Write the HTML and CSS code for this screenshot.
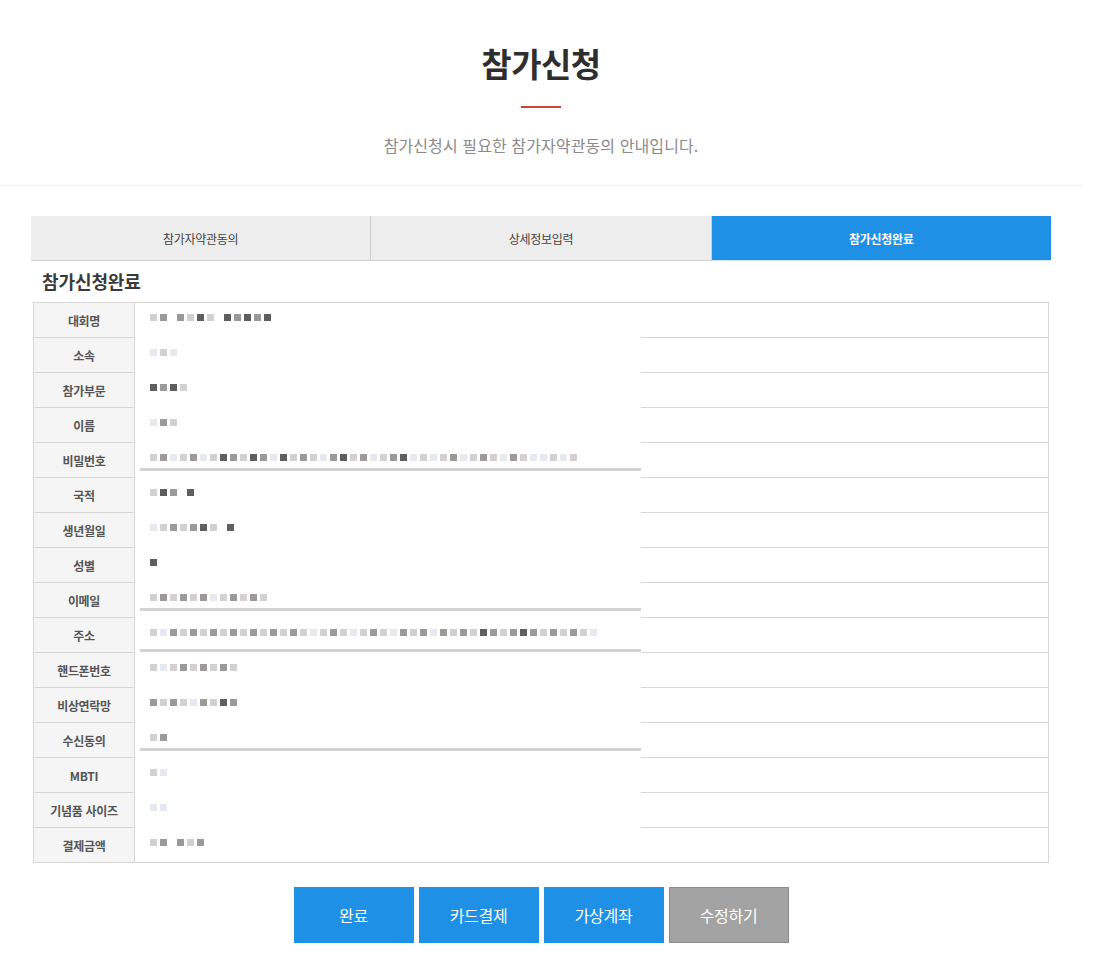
FILE: index.html
```html
<!DOCTYPE html>
<html lang="ko">
<head>
<meta charset="utf-8">
<title>참가신청</title>
<link rel="stylesheet" href="styles.css">
</head>
<body>
<div class="page">
  <header class="hero">
    <h1 class="hero-title">참가신청</h1>
    <span class="hero-bar"></span>
    <p class="hero-sub">참가신청시 필요한 참가자약관동의 안내입니다.</p>
  </header>

  <main class="content">
    <nav class="steps">
      <div class="step">참가자약관동의</div>
      <div class="step">상세정보입력</div>
      <div class="step step-active">참가신청완료</div>
    </nav>

    <h2 class="section-title">참가신청완료</h2>

    <div class="info">
      <div class="row"><div class="label">대회명</div><div class="value"><div class="mask"><div class="pix"><i class="k3"></i><i class="k2"></i><i class="gap"></i><i class="k2"></i><i class="k3"></i><i class="k1"></i><i class="k3"></i><i class="gap"></i><i class="k1"></i><i class="k2"></i><i class="k1"></i><i class="k2"></i><i class="k1"></i></div></div><div class="rest"></div></div></div>
      <div class="row"><div class="label">소속</div><div class="value"><div class="mask"><div class="pix"><i class="k4"></i><i class="k3"></i><i class="k4"></i></div></div><div class="rest"></div></div></div>
      <div class="row"><div class="label">참가부문</div><div class="value"><div class="mask"><div class="pix"><i class="k1"></i><i class="k2"></i><i class="k1"></i><i class="k3"></i></div></div><div class="rest"></div></div></div>
      <div class="row"><div class="label">이름</div><div class="value"><div class="mask"><div class="pix"><i class="k4"></i><i class="k2"></i><i class="k3"></i></div></div><div class="rest"></div></div></div>
      <div class="row"><div class="label">비밀번호</div><div class="value"><div class="mask"><div class="pix"><i class="k3"></i><i class="k2"></i><i class="k4"></i><i class="k3"></i><i class="k2"></i><i class="k4"></i><i class="k3"></i><i class="k1"></i><i class="k2"></i><i class="k3"></i><i class="k1"></i><i class="k2"></i><i class="k4"></i><i class="k1"></i><i class="k3"></i><i class="k2"></i><i class="k3"></i><i class="k4"></i><i class="k2"></i><i class="k1"></i><i class="k3"></i><i class="k2"></i><i class="k4"></i><i class="k3"></i><i class="k2"></i><i class="k1"></i><i class="k4"></i><i class="k3"></i><i class="k4"></i><i class="k3"></i><i class="k2"></i><i class="k4"></i><i class="k3"></i><i class="k2"></i><i class="k3"></i><i class="k4"></i><i class="k2"></i><i class="k3"></i><i class="k4"></i><i class="k4"></i><i class="k3"></i><i class="k4"></i><i class="k3"></i></div><div class="smear"></div></div><div class="rest"></div></div></div>
      <div class="row"><div class="label">국적</div><div class="value"><div class="mask"><div class="pix"><i class="k3"></i><i class="k1"></i><i class="k2"></i><i class="gap"></i><i class="k1"></i></div></div><div class="rest"></div></div></div>
      <div class="row"><div class="label">생년월일</div><div class="value"><div class="mask"><div class="pix"><i class="k4"></i><i class="k3"></i><i class="k2"></i><i class="k3"></i><i class="k2"></i><i class="k1"></i><i class="k3"></i><i class="gap"></i><i class="k1"></i></div></div><div class="rest"></div></div></div>
      <div class="row"><div class="label">성별</div><div class="value"><div class="mask"><div class="pix"><i class="k1"></i></div></div><div class="rest"></div></div></div>
      <div class="row"><div class="label">이메일</div><div class="value"><div class="mask"><div class="pix"><i class="k3"></i><i class="k2"></i><i class="k3"></i><i class="k2"></i><i class="k3"></i><i class="k2"></i><i class="k4"></i><i class="k3"></i><i class="k2"></i><i class="k3"></i><i class="k2"></i><i class="k3"></i></div><div class="smear"></div></div><div class="rest"></div></div></div>
      <div class="row"><div class="label">주소</div><div class="value"><div class="mask"><div class="pix"><i class="k3"></i><i class="k4"></i><i class="k2"></i><i class="k3"></i><i class="k2"></i><i class="k3"></i><i class="k2"></i><i class="k3"></i><i class="k2"></i><i class="k3"></i><i class="k2"></i><i class="k3"></i><i class="k2"></i><i class="k3"></i><i class="k2"></i><i class="k3"></i><i class="k4"></i><i class="k3"></i><i class="k2"></i><i class="k3"></i><i class="k4"></i><i class="k3"></i><i class="k2"></i><i class="k3"></i><i class="k4"></i><i class="k2"></i><i class="k3"></i><i class="k2"></i><i class="k4"></i><i class="k2"></i><i class="k3"></i><i class="k2"></i><i class="k3"></i><i class="k1"></i><i class="k2"></i><i class="k3"></i><i class="k2"></i><i class="k1"></i><i class="k2"></i><i class="k3"></i><i class="k2"></i><i class="k3"></i><i class="k2"></i><i class="k3"></i><i class="k4"></i></div><div class="smear smear-low"></div></div><div class="rest"></div></div></div>
      <div class="row"><div class="label">핸드폰번호</div><div class="value"><div class="mask"><div class="pix"><i class="k3"></i><i class="k4"></i><i class="k3"></i><i class="k2"></i><i class="k3"></i><i class="k2"></i><i class="k3"></i><i class="k2"></i><i class="k3"></i></div></div><div class="rest"></div></div></div>
      <div class="row"><div class="label">비상연락망</div><div class="value"><div class="mask"><div class="pix"><i class="k2"></i><i class="k3"></i><i class="k2"></i><i class="k3"></i><i class="k4"></i><i class="k2"></i><i class="k3"></i><i class="k1"></i><i class="k2"></i></div></div><div class="rest"></div></div></div>
      <div class="row"><div class="label">수신동의</div><div class="value"><div class="mask"><div class="pix"><i class="k3"></i><i class="k2"></i></div><div class="smear"></div></div><div class="rest"></div></div></div>
      <div class="row"><div class="label">MBTI</div><div class="value"><div class="mask"><div class="pix"><i class="k3"></i><i class="k4"></i></div></div><div class="rest"></div></div></div>
      <div class="row"><div class="label">기념품 사이즈</div><div class="value"><div class="mask"><div class="pix"><i class="k4"></i><i class="k4"></i></div></div><div class="rest"></div></div></div>
      <div class="row"><div class="label">결제금액</div><div class="value"><div class="mask"><div class="pix"><i class="k3"></i><i class="k2"></i><i class="gap"></i><i class="k2"></i><i class="k3"></i><i class="k2"></i></div></div><div class="rest"></div></div></div>
    </div>

    <div class="actions">
      <button class="btn btn-blue" type="button">완료</button>
      <button class="btn btn-blue" type="button">카드결제</button>
      <button class="btn btn-blue" type="button">가상계좌</button>
      <button class="btn btn-gray" type="button">수정하기</button>
    </div>
  </main>
</div>
</body>
</html>
```

FILE: styles.css
```css
* { box-sizing: border-box; }

html, body {
  margin: 0;
  padding: 0;
  background: #fff;
}

body {
  font-family: "Noto Sans CJK KR", "Noto Sans", sans-serif;
  color: #333;
}

.page {
  width: 1082px;
}

.hero {
  display: flex;
  flex-direction: column;
  align-items: center;
  padding-top: 43px;
  padding-bottom: 30px;
  border-bottom: 1px solid #eee;
}

.hero-title {
  margin: 0;
  font-size: 33px;
  line-height: 40px;
  font-weight: 700;
  color: #2e2e2e;
  letter-spacing: -0.5px;
}

.hero-bar {
  display: block;
  width: 40px;
  height: 2px;
  margin-top: 23px;
  background: #c9473a;
}

.hero-sub {
  margin: 27px 0 0;
  font-size: 16px;
  line-height: 20px;
  color: #8a8a8a;
  letter-spacing: 0.1px;
}

.content {
  width: 1020px;
  margin: 30px 0 0 31px;
  padding-bottom: 30px;
}

.steps {
  display: flex;
  height: 45px;
}

.step {
  flex: 1;
  display: flex;
  align-items: center;
  justify-content: center;
  background: #ededed;
  border-bottom: 1px solid #cfcfcf;
  border-right: 1px solid #cfcfcf;
  font-size: 12px;
  color: #444;
  letter-spacing: -0.3px;
}

.step-active {
  background: #1e90e6;
  color: #fff;
  font-weight: 700;
  border-right: none;
  border-bottom-color: #cfe4f7;
}

.section-title {
  margin: 8px 0 9px 11px;
  font-size: 18px;
  line-height: 24px;
  font-weight: 700;
  color: #3a3a3a;
  letter-spacing: -0.1px;
}

.info {
  margin-left: 2px;
  width: 1016px;
  border: 1px solid #d6d6d6;
  border-bottom: none;
}

.row {
  display: flex;
  height: 35px;
}

.label {
  width: 101px;
  flex: none;
  display: flex;
  align-items: center;
  justify-content: center;
  background: #f5f5f5;
  border-right: 1px solid #d6d6d6;
  border-bottom: 1px solid #d6d6d6;
  font-size: 12px;
  font-weight: 700;
  color: #555;
  letter-spacing: -0.3px;
}

.value {
  flex: 1;
  display: flex;
}

.mask {
  width: 506px;
  flex: none;
  display: flex;
  flex-direction: column;
  padding-top: 10px;
}

.rest {
  flex: 1;
  border-bottom: 1px solid #d6d6d6;
}

.row:last-child .mask {
  border-bottom: 1px solid #d6d6d6;
}

.pix {
  display: flex;
  align-items: center;
  gap: 3px;
  padding-left: 15px;
  height: 8px;
}

.pix i {
  display: block;
  width: 7px;
  height: 7px;
}

.pix .k1 { background: #5e5e5e; }
.pix .k2 { background: #9c9a98; }
.pix .k3 { background: #d2d0d0; }
.pix .k4 { background: #e7e9f0; }
.pix .gap { width: 4px; }

.smear {
  margin-top: auto;
  margin-bottom: 7px;
  margin-left: 5px;
  height: 3px;
  background: #d3d3d3;
}

.smear-low {
  margin-bottom: 1px;
}

.actions {
  display: flex;
  justify-content: center;
  gap: 5px;
  margin-top: 24px;
}

.btn {
  width: 120px;
  height: 56px;
  border: none;
  font-family: "Noto Sans CJK KR", "Noto Sans", sans-serif;
  font-size: 16px;
  color: #fff;
  cursor: pointer;
  letter-spacing: -0.3px;
}

.btn-blue {
  background: #1e90e6;
}

.btn-gray {
  background: #a3a3a3;
  border: 1px solid #8c8c8c;
}
```
